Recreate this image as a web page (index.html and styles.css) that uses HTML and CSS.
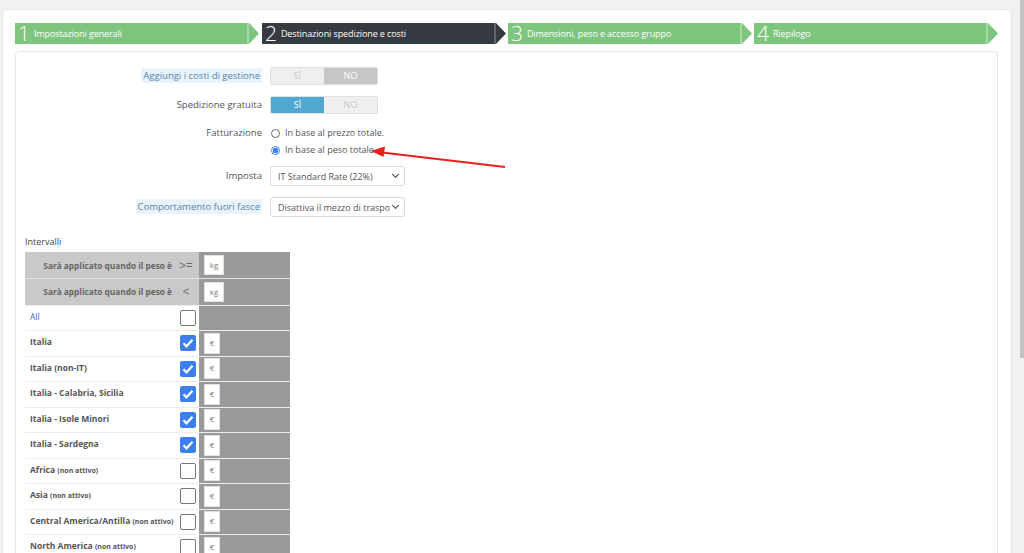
FILE: index.html
```html
<!DOCTYPE html>
<html lang="it">
<head>
    <meta charset="UTF-8">
    <title>Mezzo di trasporto</title>
    <link rel="stylesheet" href="styles.css">
</head>
<body>
    <div class="page">
        <div class="panel">
            <div class="steps">
                <div class="step done"><span class="num">1</span>Impostazioni generali</div>
                <div class="step current"><span class="num">2</span>Destinazioni spedizione e costi</div>
                <div class="step done"><span class="num">3</span>Dimensioni, peso e accesso gruppo</div>
                <div class="step done"><span class="num">4</span>Riepilogo</div>
            </div>

            <div class="form-box">
                <div class="form-row">
                    <div class="label"><span class="hint">Aggiungi i costi di gestione</span></div>
                    <div class="switch">
                        <span>SÌ</span>
                        <span class="off-on">NO</span>
                    </div>
                </div>
                <div class="form-row">
                    <div class="label">Spedizione gratuita</div>
                    <div class="switch">
                        <span class="on">SÌ</span>
                        <span>NO</span>
                    </div>
                </div>
                <div class="form-row top">
                    <div class="label">Fatturazione</div>
                    <div class="radios">
                        <label class="radio"><span class="dot"></span>In base al prezzo totale.</label>
                        <label class="radio"><span class="dot checked"></span>In base al peso totale.</label>
                    </div>
                </div>
                <div class="form-row">
                    <div class="label">Imposta</div>
                    <div class="select"><span class="val">IT Standard Rate (22%)</span><span class="chev"></span></div>
                </div>
                <div class="form-row">
                    <div class="label"><span class="hint">Comportamento fuori fasce</span></div>
                    <div class="select"><span class="val">Disattiva il mezzo di trasporto</span><span class="chev"></span></div>
                </div>

                <div class="ranges-title">Intervalli</div>
                <div class="ranges">
                    <div class="r-row head">
                        <div class="r-left"><span class="r-name">Sarà applicato quando il peso è</span><span class="op">&gt;=</span></div>
                        <div class="r-right"><span class="unit">kg</span></div>
                    </div>
                    <div class="r-row head">
                        <div class="r-left"><span class="r-name">Sarà applicato quando il peso è</span><span class="op">&lt;</span></div>
                        <div class="r-right"><span class="unit">kg</span></div>
                    </div>
                    <div class="r-row">
                        <div class="r-left"><span class="r-name all">All</span><span class="check"></span></div>
                        <div class="r-right"></div>
                    </div>
                    <div class="r-row">
                        <div class="r-left"><span class="r-name">Italia</span><span class="check on"></span></div>
                        <div class="r-right"><span class="eur">€</span></div>
                    </div>
                    <div class="r-row">
                        <div class="r-left"><span class="r-name">Italia (non-IT)</span><span class="check on"></span></div>
                        <div class="r-right"><span class="eur">€</span></div>
                    </div>
                    <div class="r-row">
                        <div class="r-left"><span class="r-name">Italia - Calabria, Sicilia</span><span class="check on"></span></div>
                        <div class="r-right"><span class="eur">€</span></div>
                    </div>
                    <div class="r-row">
                        <div class="r-left"><span class="r-name">Italia - Isole Minori</span><span class="check on"></span></div>
                        <div class="r-right"><span class="eur">€</span></div>
                    </div>
                    <div class="r-row">
                        <div class="r-left"><span class="r-name">Italia - Sardegna</span><span class="check on"></span></div>
                        <div class="r-right"><span class="eur">€</span></div>
                    </div>
                    <div class="r-row">
                        <div class="r-left"><span class="r-name">Africa <small>(non attivo)</small></span><span class="check"></span></div>
                        <div class="r-right"><span class="eur">€</span></div>
                    </div>
                    <div class="r-row">
                        <div class="r-left"><span class="r-name">Asia <small>(non attivo)</small></span><span class="check"></span></div>
                        <div class="r-right"><span class="eur">€</span></div>
                    </div>
                    <div class="r-row">
                        <div class="r-left"><span class="r-name">Central America/Antilla <small>(non attivo)</small></span><span class="check"></span></div>
                        <div class="r-right"><span class="eur">€</span></div>
                    </div>
                    <div class="r-row">
                        <div class="r-left"><span class="r-name">North America <small>(non attivo)</small></span><span class="check"></span></div>
                        <div class="r-right"><span class="eur">€</span></div>
                    </div>
                </div>
            </div>
        </div>
    </div>

    <!-- freccia rossa aggiunta sullo screenshot -->
    <svg class="red-arrow" width="1024" height="553" viewBox="0 0 1024 553">
        <line x1="505" y1="167" x2="382" y2="152.5" stroke="#e8201c" stroke-width="2.2"/>
        <polygon points="371,151 385,146.5 383.5,157" fill="#e8201c"/>
    </svg>

    <div class="scrollbar"><div class="thumb"></div></div>
</body>
</html>
```

FILE: styles.css
```css
html, body {
    margin: 0;
    height: 100%;
    overflow: hidden;
}
body {
    background-color: #eff1f2;
    font-family: "Open Sans", "Noto Sans", sans-serif;
    color: #555;
}
.page {
    padding: 9px 12px 0 2px;
}
.panel {
    background-color: #fff;
    border: 1px solid #e4e6e8;
    border-radius: 5px;
    padding: 13px 13px 0 12px;
    height: 600px;
}

/* passi */
.steps {
    display: flex;
    gap: 2px;
    height: 21px;
    margin-right: 1px;
}
.step {
    position: relative;
    width: 244px;
    flex: none;
    display: flex;
    align-items: center;
    color: #fff;
    font-size: 9px;
    letter-spacing: -0.1px;
    padding-left: 3px;
    box-sizing: border-box;
    clip-path: polygon(0 0, calc(100% - 10px) 0, 100% 50%, calc(100% - 10px) 100%, 0 100%);
}
.step::after {
    content: "";
    position: absolute;
    top: 0;
    bottom: 0;
    right: 10px;
    width: 2px;
}
.step.done {
    background-color: #7ec57e;
}
.step.done::after {
    background-color: #a9d9a9;
}
.step.current {
    background-color: #363a41;
    margin-left: 1px;
}
.step.current::after {
    background-color: #61656c;
}
.step .num {
    font-size: 21px;
    font-weight: 300;
    line-height: 21px;
    margin-right: 4px;
}

/* box del form */
.form-box {
    margin-top: 7px;
    border: 1px solid #e6e7e8;
    border-radius: 4px;
    padding: 15px 9px 40px 9px;
    min-height: 520px;
}
.form-row {
    display: flex;
    align-items: center;
    margin-bottom: 11px;
    font-size: 9.5px;
}
.form-row.top {
    align-items: flex-start;
    margin-top: 10px;
    margin-bottom: 8px;
}
.label {
    width: 237px;
    text-align: right;
    padding-right: 8px;
    flex: none;
    line-height: 16px;
}
.hint {
    background-color: #e8f3fa;
    color: #5a84ad;
    padding: 1px 2px;
}

.switch {
    display: flex;
    width: 108px;
    height: 18px;
    border: 1px solid #e0e0e0;
    border-radius: 2px;
    box-sizing: border-box;
    overflow: hidden;
    background-color: #efefef;
}
.switch span {
    flex: 1;
    text-align: center;
    line-height: 16px;
    font-size: 9px;
    color: #c8c8c8;
}
.switch .off-on {
    background-color: #c6c6c6;
    color: #fff;
}
.switch .on {
    background-color: #4fa8cf;
    color: #fff;
}

.radios {
    display: flex;
    flex-direction: column;
    gap: 1px;
}
.radio {
    display: flex;
    align-items: center;
    line-height: 16px;
    font-size: 9px;
}
.dot {
    width: 7px;
    height: 7px;
    border: 1px solid #6b6b6b;
    border-radius: 50%;
    margin-right: 5px;
    margin-left: 1px;
}
.dot.checked {
    border-color: #3b7ff1;
    background: radial-gradient(circle, #3b7ff1 0 2.6px, #fff 3px);
}

.select {
    display: flex;
    align-items: center;
    width: 135px;
    height: 20px;
    border: 1px solid #d9d9d9;
    border-radius: 3px;
    box-sizing: border-box;
    font-size: 9px;
    padding-left: 7px;
    color: #555;
    background-color: #fff;
}
.select .val {
    flex: 1;
    white-space: nowrap;
    overflow: hidden;
}
.chev {
    flex: none;
    width: 4px;
    height: 4px;
    margin: -3px 6px 0 3px;
    border-right: 1.3px solid #444;
    border-bottom: 1.3px solid #444;
    transform: rotate(45deg);
}

/* intervalli */
.ranges-title {
    font-size: 9px;
    color: #444;
    margin-top: 18px;
    margin-bottom: 4px;
}
.ranges {
    width: 265px;
}
.r-row {
    display: flex;
    height: 25.5px;
    border-top: 1px solid #ececec;
    box-sizing: border-box;
}
.r-row.head {
    height: 26.5px;
    border-top-color: #e2e2e2;
}
.r-row:first-child {
    border-top: none;
    height: 26px;
}
.r-left {
    width: 174px;
    display: flex;
    align-items: center;
    justify-content: space-between;
    padding: 0 3px 0 5px;
    box-sizing: border-box;
}
.head .r-left {
    background-color: #c9c9c9;
    justify-content: flex-end;
}
.r-right {
    flex: 1;
    background-color: #9a9a9a;
    display: flex;
    align-items: center;
    padding-left: 5px;
}
.r-name {
    font-size: 8.5px;
    font-weight: 700;
    color: #555;
    margin-top: -3px;
    white-space: nowrap;
}
.r-name small {
    font-size: 7px;
}
.r-name.all {
    font-weight: 400;
    color: #3f6e9a;
    font-size: 8.5px;
}
.head .r-name {
    font-size: 8.3px;
    color: #666;
    margin-top: 0;
}
.op {
    width: 20px;
    margin-left: 4px;
    text-align: center;
    font-size: 12px;
    color: #666;
}
.unit, .eur {
    display: inline-block;
    background-color: #fff;
    border: 1px solid #e2e2e2;
    box-sizing: border-box;
    height: 20px;
    line-height: 18px;
    text-align: center;
    font-size: 8px;
    color: #777;
}
.unit {
    width: 20px;
}
.eur {
    width: 16px;
    height: 21px;
}
.check {
    width: 16px;
    height: 16px;
    border: 1px solid #777;
    border-radius: 2px;
    box-sizing: border-box;
    background-color: #fff;
    flex: none;
    margin-left: auto;
}
.check.on {
    border: none;
    background-color: #3b7ff1;
    background-image: url("data:image/svg+xml,%3Csvg xmlns='http://www.w3.org/2000/svg' viewBox='0 0 16 16'%3E%3Cpath d='M3.5 8.3l3 3 6-6.6' fill='none' stroke='white' stroke-width='2.2'/%3E%3C/svg%3E");
}

.red-arrow {
    position: absolute;
    left: 0;
    top: 0;
    pointer-events: none;
}
.scrollbar {
    position: fixed;
    top: 0;
    right: 0;
    width: 5px;
    height: 100%;
    background-color: #f1f1f1;
}
.thumb {
    width: 4px;
    margin-left: 1px;
    height: 358px;
    background-color: #c1c1c1;
}
```
